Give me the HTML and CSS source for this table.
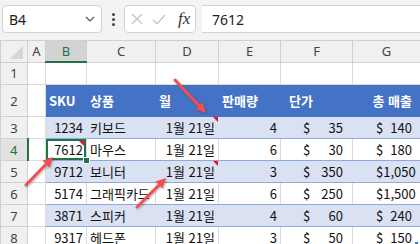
FILE: index.html
```html
<!DOCTYPE html>
<html lang="ko">
<head>
<meta charset="UTF-8">
<title>Sheet</title>
<link rel="stylesheet" href="styles.css">
</head>
<body>

<div class="formula-bar">
    <div class="name-box">
        <span class="ref">B4</span>
        <svg class="chev" width="10" height="6" viewBox="0 0 10 6"><path d="M1 1l4 4 4-4" fill="none" stroke="#555" stroke-width="1.2"/></svg>
    </div>
    <div class="grip"><i></i><i></i><i></i></div>
    <div class="fx-box">
        <svg width="12" height="12" viewBox="0 0 12 12"><path d="M1 1l10 10M11 1L1 11" stroke="#c2c2c2" stroke-width="1.2"/></svg>
        <svg width="14" height="11" viewBox="0 0 14 11"><path d="M1 6l4 4 8-9" fill="none" stroke="#c2c2c2" stroke-width="1.2"/></svg>
        <span class="fx">fx</span>
    </div>
    <div class="formula-input">7612</div>
</div>

<table class="grid">
    <colgroup>
        <col style="width:27px"><col style="width:18px"><col style="width:41px"><col style="width:69px">
        <col style="width:63px"><col style="width:62px"><col style="width:72px"><col style="width:68px">
    </colgroup>
    <tr class="colhead">
        <th class="corner"><span class="tri"></span></th>
        <th>A</th><th class="active">B</th><th>C</th><th>D</th><th>E</th><th>F</th><th>G</th>
    </tr>
    <tr class="r1">
        <td class="rh">1</td><td></td><td></td><td></td><td></td><td></td><td></td><td></td>
    </tr>
    <tr class="hdr">
        <td class="rh">2</td><td class="blank"></td>
        <td>SKU</td><td>상품</td><td>월</td><td>판매량</td><td class="h-f">단가</td><td class="h-g">총 매출</td>
    </tr>
    <tr class="band">
        <td class="rh">3</td><td class="blank"></td>
        <td class="num">1234</td><td class="txt">키보드</td><td class="date note">1월 21일</td><td class="qty">4</td>
        <td><div class="acc f"><span>$</span><span>35</span></div></td>
        <td><div class="acc g"><span>$</span><span>140</span></div></td>
    </tr>
    <tr class="plain">
        <td class="rh active">4</td><td class="blank"></td>
        <td class="num sel note">7612</td><td class="txt">마우스</td><td class="date">1월 21일</td><td class="qty">6</td>
        <td><div class="acc f"><span>$</span><span>30</span></div></td>
        <td><div class="acc g"><span>$</span><span>180</span></div></td>
    </tr>
    <tr class="band">
        <td class="rh">5</td><td class="blank"></td>
        <td class="num">9712</td><td class="txt">보니터</td><td class="date note">1월 21일</td><td class="qty">3</td>
        <td><div class="acc f"><span>$</span><span>350</span></div></td>
        <td><div class="acc g"><span>$</span><span>1,050</span></div></td>
    </tr>
    <tr class="plain">
        <td class="rh">6</td><td class="blank"></td>
        <td class="num">5174</td><td class="txt">그래픽카드</td><td class="date">1월 21일</td><td class="qty">6</td>
        <td><div class="acc f"><span>$</span><span>250</span></div></td>
        <td><div class="acc g"><span>$</span><span>1,500</span></div></td>
    </tr>
    <tr class="band">
        <td class="rh">7</td><td class="blank"></td>
        <td class="num">3871</td><td class="txt">스피커</td><td class="date">1월 21일</td><td class="qty">4</td>
        <td><div class="acc f"><span>$</span><span>60</span></div></td>
        <td><div class="acc g"><span>$</span><span>240</span></div></td>
    </tr>
    <tr class="plain">
        <td class="rh">8</td><td class="blank"></td>
        <td class="num">9317</td><td class="txt">헤드폰</td><td class="date">1월 21일</td><td class="qty">3</td>
        <td><div class="acc f"><span>$</span><span>50</span></div></td>
        <td class="last"><div class="acc g"><span>$</span><span>150</span></div></td>
    </tr>
</table>

<svg class="arrows" width="420" height="244" viewBox="0 0 420 244">
    <defs>
        <marker id="head" markerUnits="userSpaceOnUse" markerWidth="12" markerHeight="12" refX="4" refY="5" orient="auto">
            <path d="M0 0L10 5L0 10z" fill="#f0504f"/>
        </marker>
        <filter id="shade" x="-20%" y="-20%" width="140%" height="140%">
            <feDropShadow dx="1" dy="1" stdDeviation="0.8" flood-opacity="0.3"/>
        </filter>
    </defs>
    <g stroke="#f0504f" stroke-width="3" stroke-linecap="round" filter="url(#shade)" marker-end="url(#head)">
        <line x1="175" y1="80" x2="201.9" y2="108.6"/>
        <line x1="26" y1="185" x2="48.8" y2="161.3"/>
        <line x1="137" y1="207" x2="161.8" y2="182.2"/>
    </g>
</svg>

</body>
</html>
```

FILE: styles.css
```css
body {
    margin: 0;
    background-color: #f3f3f3;
    font-family: "Noto Sans CJK KR", sans-serif;
    position: relative;
    width: 420px;
    height: 244px;
    overflow: hidden;
}

.formula-bar {
    display: flex;
    align-items: flex-start;
    height: 35px;
    padding: 5px 0 0 2px;
    box-sizing: border-box;
}

.name-box {
    width: 100px;
    height: 28px;
    box-sizing: border-box;
    background-color: #fff;
    border: 1px solid #d4d4d4;
    border-radius: 4px;
    display: flex;
    align-items: center;
    justify-content: space-between;
    padding: 0 6px 0 6px;
    font-family: "Noto Sans", sans-serif;
    font-size: 14px;
    color: #222;
}

.grip {
    width: 22px;
    height: 28px;
    display: flex;
    flex-direction: column;
    align-items: center;
    justify-content: center;
    gap: 2px;
}

.grip i {
    width: 3px;
    height: 3px;
    border-radius: 50%;
    background-color: #444;
}

.fx-box {
    width: 72px;
    height: 28px;
    box-sizing: border-box;
    background-color: #fff;
    border: 1px solid #d4d4d4;
    border-radius: 4px;
    display: flex;
    align-items: center;
    gap: 9px;
    padding-left: 6px;
    margin-right: 6px;
}

.fx {
    font-family: "Liberation Serif", serif;
    font-style: italic;
    font-size: 17px;
    color: #333;
    margin-left: 3px;
}

.formula-input {
    flex: 1;
    height: 28px;
    box-sizing: border-box;
    background-color: #fff;
    border-top: 1px solid #d4d4d4;
    border-bottom: 1px solid #d4d4d4;
    display: flex;
    align-items: center;
    padding-left: 10px;
    font-family: "Noto Sans", sans-serif;
    font-size: 14px;
    color: #222;
}

.grid {
    border-collapse: collapse;
    table-layout: fixed;
    width: 420px;
    margin-top: 5px;
    font-size: 13px;
    color: #111;
}

.grid td,
.grid th {
    padding: 0 3px;
    border: 1px solid #dadada;
    white-space: nowrap;
    font-weight: normal;
    background-color: #fff;
}

.colhead th {
    height: 20px;
    background-color: #f0f0f0;
    border-color: #d0d0d0;
    font-family: "Noto Sans", sans-serif;
    font-size: 13px;
    color: #444;
    text-align: center;
    padding: 0;
}

.colhead th.active {
    background-color: #d3d3d3;
    color: #217346;
    border-bottom: 2px solid #217346;
}

.corner {
    position: relative;
}

.tri {
    position: absolute;
    right: 4px;
    bottom: 3px;
    width: 0;
    height: 0;
    border-left: 13px solid transparent;
    border-bottom: 13px solid #d6d6d6;
}

.grid td.rh {
    background-color: #f0f0f0;
    border-color: #d0d0d0;
    font-family: "Noto Sans", sans-serif;
    color: #444;
    text-align: center;
    padding: 0;
}

.grid td.rh.active {
    background-color: #e2e2e2;
    color: #217346;
    border-right: 2px solid #217346;
}

.r1 td { height: 21px; }
.hdr td { height: 31px; }
.band td, .plain td { height: 21px; }

.hdr td:not(.rh):not(.blank) {
    background-color: #4472c4;
    border-color: #4472c4;
    color: #fff;
    font-weight: bold;
}

.hdr .h-f { padding-left: 8px; }
.hdr .h-g { text-align: right; padding-right: 8px; }

.band td:not(.rh):not(.blank) {
    background-color: #d9e1f2;
    border-left-color: #d9e1f2;
    border-right-color: #d9e1f2;
    border-top-color: #8ea9db;
    border-bottom-color: #8ea9db;
}

.plain td:not(.rh):not(.blank) {
    border-top-color: #8ea9db;
    border-bottom-color: #8ea9db;
}

.num { text-align: right; }
.txt { overflow: hidden; padding-left: 2px; }
.date { text-align: right; padding-right: 1px; }
.qty { text-align: right; padding-right: 3px; }

.grid td.acc-cell { padding: 0; }

.acc {
    display: flex;
    justify-content: space-between;
}

.acc.f { padding: 0 6px 0 19px; }
.acc.g { padding: 0 5px 0 20px; }

.note,
.sel {
    position: relative;
}

.note::after {
    content: "";
    position: absolute;
    top: 0;
    right: 0;
    border-top: 5px solid #e81123;
    border-left: 5px solid transparent;
}

.sel.note::after {
    top: 2px;
    right: 2px;
}

.grid td.sel {
    box-shadow: inset 0 0 0 2px #217346;
}

.sel::before {
    content: "";
    position: absolute;
    right: -4px;
    bottom: -4px;
    width: 5px;
    height: 5px;
    background-color: #217346;
    border: 1px solid #fff;
    z-index: 2;
}

.last {
    position: relative;
}

.last::after {
    content: "";
    position: absolute;
    right: 2px;
    bottom: 3px;
    width: 3px;
    height: 3px;
    background-color: #4472c4;
}

.arrows {
    position: absolute;
    top: 0;
    left: 0;
    pointer-events: none;
}
```
